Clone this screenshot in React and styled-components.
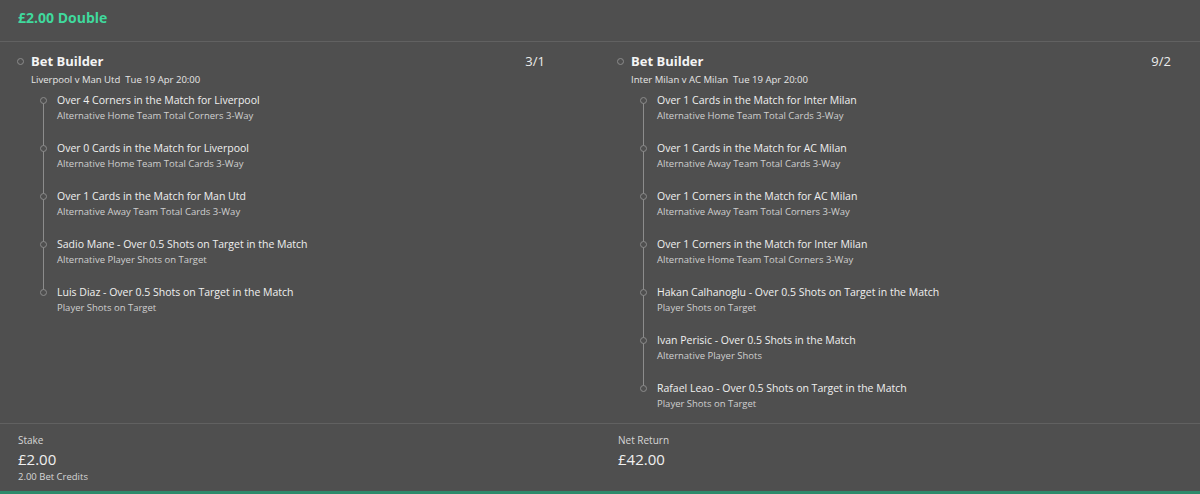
import styled, { createGlobalStyle } from "styled-components";

const GlobalStyle = createGlobalStyle`
	html, body {
		margin: 0;
		padding: 0;
		background: #4f4f4f;
	}
	body {
		font-family: "Open Sans", "Noto Sans", sans-serif;
	}
`;

const legs = [
	{
		odds: "3/1",
		pad: 55,
		match: "Liverpool v Man Utd",
		time: "Tue 19 Apr 20:00",
		selections: [
			["Over 4 Corners in the Match for Liverpool", "Alternative Home Team Total Corners 3-Way"],
			["Over 0 Cards in the Match for Liverpool", "Alternative Home Team Total Cards 3-Way"],
			["Over 1 Cards in the Match for Man Utd", "Alternative Away Team Total Cards 3-Way"],
			["Sadio Mane - Over 0.5 Shots on Target in the Match", "Alternative Player Shots on Target"],
			["Luis Diaz - Over 0.5 Shots on Target in the Match", "Player Shots on Target"],
		],
	},
	{
		odds: "9/2",
		pad: 29,
		match: "Inter Milan v AC Milan",
		time: "Tue 19 Apr 20:00",
		selections: [
			["Over 1 Cards in the Match for Inter Milan", "Alternative Home Team Total Cards 3-Way"],
			["Over 1 Cards in the Match for AC Milan", "Alternative Away Team Total Cards 3-Way"],
			["Over 1 Corners in the Match for AC Milan", "Alternative Away Team Total Corners 3-Way"],
			["Over 1 Corners in the Match for Inter Milan", "Alternative Home Team Total Corners 3-Way"],
			["Hakan Calhanoglu - Over 0.5 Shots on Target in the Match", "Player Shots on Target"],
			["Ivan Perisic - Over 0.5 Shots in the Match", "Alternative Player Shots"],
			["Rafael Leao - Over 0.5 Shots on Target in the Match", "Player Shots on Target"],
		],
	},
];

const App = () => {
	return (
		<>
			<GlobalStyle />
			<SlipSC>
				<HeaderSC>£2.00 Double</HeaderSC>
				<LegsSC>
					{legs.map((leg) => (
						<LegSC key={leg.match} $pad={leg.pad}>
							<LegHeadSC>
								<Dot />
								<LegTitleSC>Bet Builder</LegTitleSC>
								<OddsSC>{leg.odds}</OddsSC>
							</LegHeadSC>
							<MatchSC>
								{leg.match}
								<span>{leg.time}</span>
							</MatchSC>
							<SelectionsSC>
								{leg.selections.map(([title, market]) => (
									<SelectionSC key={title}>
										<Dot />
										<div>
											<SelTitleSC>{title}</SelTitleSC>
											<SelMarketSC>{market}</SelMarketSC>
										</div>
									</SelectionSC>
								))}
							</SelectionsSC>
						</LegSC>
					))}
				</LegsSC>
				<FooterSC>
					<SummarySC>
						<LabelSC>Stake</LabelSC>
						<AmountSC>£2.00</AmountSC>
						<NoteSC>2.00 Bet Credits</NoteSC>
					</SummarySC>
					<SummarySC>
						<LabelSC>Net Return</LabelSC>
						<AmountSC>£42.00</AmountSC>
					</SummarySC>
				</FooterSC>
			</SlipSC>
		</>
	);
};

const SlipSC = styled.div`
	width: 1200px;
	height: 494px;
	background: #4f4f4f;
	color: #f2f2f2;
	display: flex;
	flex-direction: column;
	border-bottom: 3px solid #2e8a6b;
	box-sizing: border-box;
`;

const HeaderSC = styled.div`
	height: 42px;
	box-sizing: border-box;
	padding: 9px 18px 0;
	font-size: 14px;
	line-height: 18px;
	font-weight: 700;
	color: #40d99d;
	border-bottom: 1px solid #616161;
`;

const LegsSC = styled.div`
	display: grid;
	grid-template-columns: 600px 600px;
	padding: 10px 0 11px;
	border-bottom: 1px solid #616161;
`;

const LegSC = styled.div`
	padding: 0 ${(p) => p.$pad}px 0 17px;
`;

const Dot = styled.span`
	display: block;
	width: 7px;
	height: 7px;
	box-sizing: border-box;
	border: 1px solid #8c8c8c;
	border-radius: 50%;
	flex-shrink: 0;
	background: #4f4f4f;
	position: relative;
	z-index: 1;
`;

const LegHeadSC = styled.div`
	display: flex;
	align-items: center;
	gap: 7px;
	height: 18px;
`;

const LegTitleSC = styled.div`
	flex: 1;
	font-size: 13px;
	font-weight: 700;
	color: #f4f4f4;
`;

const OddsSC = styled.div`
	font-size: 13px;
	color: #ececec;
`;

const MatchSC = styled.div`
	margin: 3px 0 0 14px;
	font-size: 9.55px;
	line-height: 14px;
	color: #e6e6e6;
	span {
		margin-left: 5px;
	}
`;

const SelectionsSC = styled.div`
	margin: 5px 0 0 23px;
	display: flex;
	flex-direction: column;
	gap: 16px;
`;

const SelectionSC = styled.div`
	position: relative;
	display: flex;
	align-items: flex-start;
	gap: 10px;
	${Dot} {
		margin-top: 4.5px;
	}
	&:not(:last-child)::before {
		content: "";
		position: absolute;
		left: 3px;
		top: 8px;
		width: 1px;
		height: 48px;
		background: #8c8c8c;
	}
`;

const SelTitleSC = styled.div`
	font-size: 10.5px;
	line-height: 16px;
	color: #f0f0f0;
`;

const SelMarketSC = styled.div`
	font-size: 9.5px;
	line-height: 16px;
	color: #cfcfcf;
`;

const FooterSC = styled.div`
	display: grid;
	grid-template-columns: 600px 600px;
	padding: 9px 18px 0;
`;

const SummarySC = styled.div`
	display: flex;
	flex-direction: column;
`;

const LabelSC = styled.div`
	font-size: 10px;
	line-height: 14px;
	color: #d6d6d6;
`;

const AmountSC = styled.div`
	font-size: 15px;
	line-height: 22px;
	margin-top: 1px;
	color: #f0f0f0;
`;

const NoteSC = styled.div`
	font-size: 9.5px;
	line-height: 14px;
	color: #d6d6d6;
`;

export default App;
